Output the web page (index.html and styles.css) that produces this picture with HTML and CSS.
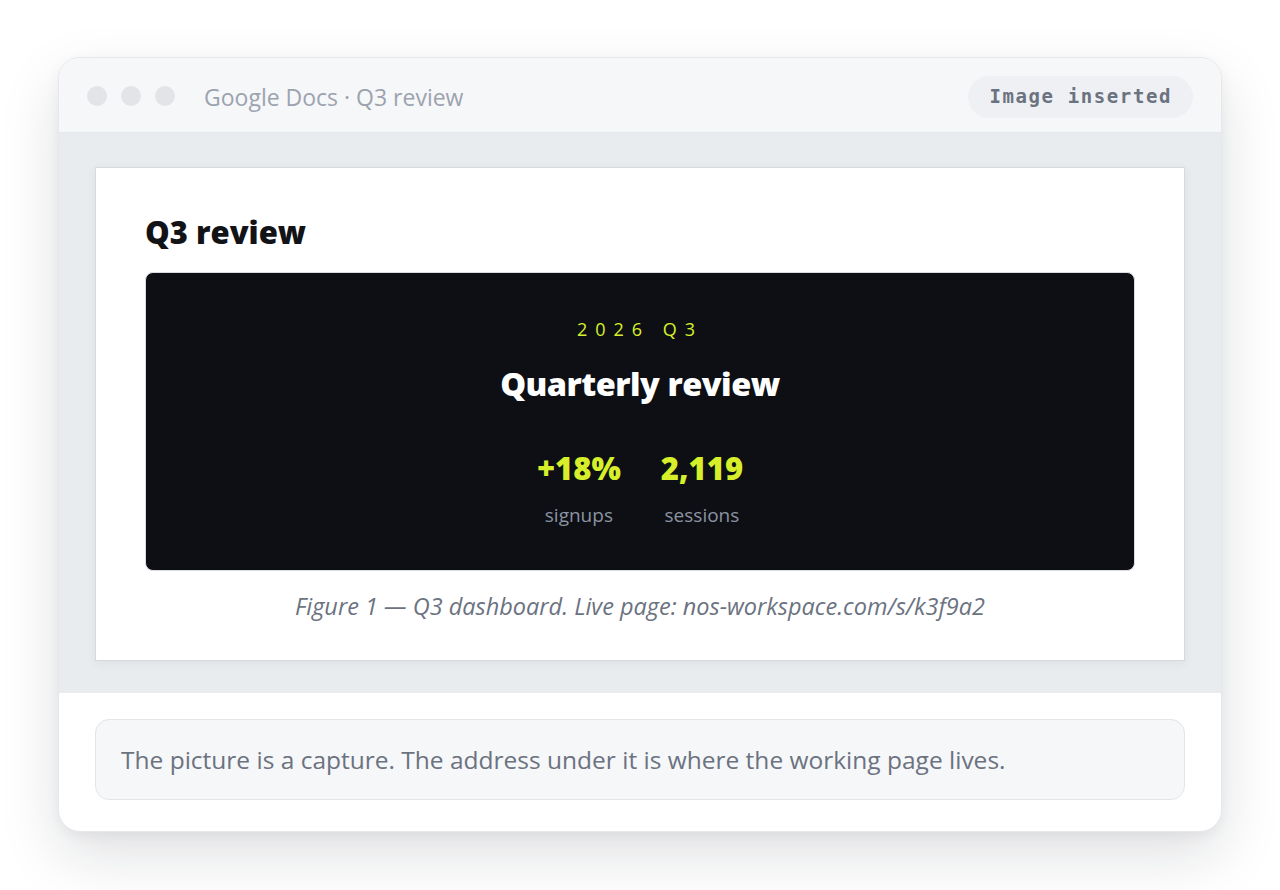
FILE: index.html
```html
<!DOCTYPE html>
<html lang="en">

<head>
    <meta charset="utf-8" />
    <title>Google Docs · Q3 review</title>
    <link rel="stylesheet" href="styles.css">
</head>

<body>

    <div class="window">
        <div class="titlebar">
            <div class="dots">
                <span class="dot"></span>
                <span class="dot"></span>
                <span class="dot"></span>
            </div>
            <div class="title">Google Docs · Q3 review</div>
            <div class="badge">Image inserted</div>
        </div>

        <div class="desk">
            <div class="doc-page">
                <h1 class="doc-title">Q3 review</h1>

                <div class="figure">
                    <div class="eyebrow">2026 Q3</div>
                    <div class="figure-title">Quarterly review</div>
                    <div class="stats">
                        <div class="stat">
                            <div class="stat-value">+18%</div>
                            <div class="stat-label">signups</div>
                        </div>
                        <div class="stat">
                            <div class="stat-value">2,119</div>
                            <div class="stat-label">sessions</div>
                        </div>
                    </div>
                </div>

                <p class="caption">Figure 1 — Q3 dashboard. Live page: nos-workspace.com/s/k3f9a2</p>
            </div>
        </div>

        <div class="footer">
            <div class="note">The picture is a capture. The address under it is where the working page lives.</div>
        </div>
    </div>

</body>

</html>
```

FILE: styles.css
```css
* {
    box-sizing: border-box;
}

body {
    margin: 0;
    padding: 57px 0 58px;
    background: #ffffff;
    font-family: "Open Sans", "Noto Sans", sans-serif;
}

.window {
    width: 1164px;
    margin: 0 auto;
    background: #ffffff;
    border: 1px solid #e6e8eb;
    border-radius: 22px;
    overflow: hidden;
    box-shadow: 0 24px 60px rgba(15, 23, 42, 0.13), 0 4px 14px rgba(15, 23, 42, 0.05);
}

.titlebar {
    height: 75px;
    display: flex;
    align-items: center;
    padding: 2px 28px 0;
    background: #f6f7f9;
    border-bottom: 1px solid #e5e7eb;
}

.dots {
    display: flex;
    gap: 14px;
}

.dot {
    width: 20px;
    height: 20px;
    border-radius: 50%;
    background: #e2e4e8;
}

.title {
    margin-left: 29px;
    font-size: 23px;
    color: #9ca3af;
    padding-top: 1px;
}

.badge {
    margin-left: auto;
    margin-top: 2px;
    padding: 9px 21px 10px;
    border-radius: 21px;
    background: #eef0f3;
    font-family: "DejaVu Sans Mono", "Liberation Mono", monospace;
    font-weight: bold;
    font-size: 19px;
    letter-spacing: 1.6px;
    line-height: 23px;
    color: #6b7280;
}

.desk {
    background: #e9ecef;
    padding: 34px 36px 32px;
}

.doc-page {
    background: #ffffff;
    border: 1px solid #d6d9de;
    box-shadow: 0 2px 10px rgba(15, 23, 42, 0.06);
    padding: 43px 49px 38px;
}

.doc-title {
    margin: 0 0 19px;
    font-size: 31px;
    font-weight: 800;
    line-height: 42px;
    color: #111317;
}

.figure {
    height: 299px;
    background: #0d0f14;
    border: 1px solid #d8dbe0;
    border-radius: 8px;
    display: flex;
    flex-direction: column;
    align-items: center;
    padding-top: 44px;
}

.eyebrow {
    font-size: 18px;
    letter-spacing: 8px;
    color: #d7ef2a;
    line-height: 24px;
}

.figure-title {
    margin-top: 21px;
    font-size: 32.5px;
    font-weight: 800;
    line-height: 44px;
    color: #ffffff;
    letter-spacing: -0.5px;
}

.stats {
    display: flex;
    gap: 40px;
    margin-top: 42px;
}

.stat {
    display: flex;
    flex-direction: column;
    align-items: center;
}

.stat-value {
    font-size: 31px;
    font-weight: 800;
    line-height: 40px;
    color: #d7ef2a;
}

.stat-label {
    margin-top: 14px;
    font-size: 19px;
    color: #8b93a1;
}

.caption {
    margin: 19px 0 0;
    text-align: center;
    font-style: italic;
    font-size: 23.5px;
    line-height: 32px;
    color: #6b7280;
}

.footer {
    padding: 26px 36px 31px;
}

.note {
    height: 81px;
    display: flex;
    align-items: center;
    padding: 0 25px;
    background: #f6f7f9;
    border: 1px solid #e3e5e9;
    border-radius: 14px;
    font-size: 24.5px;
    color: #6b7280;
}
```
